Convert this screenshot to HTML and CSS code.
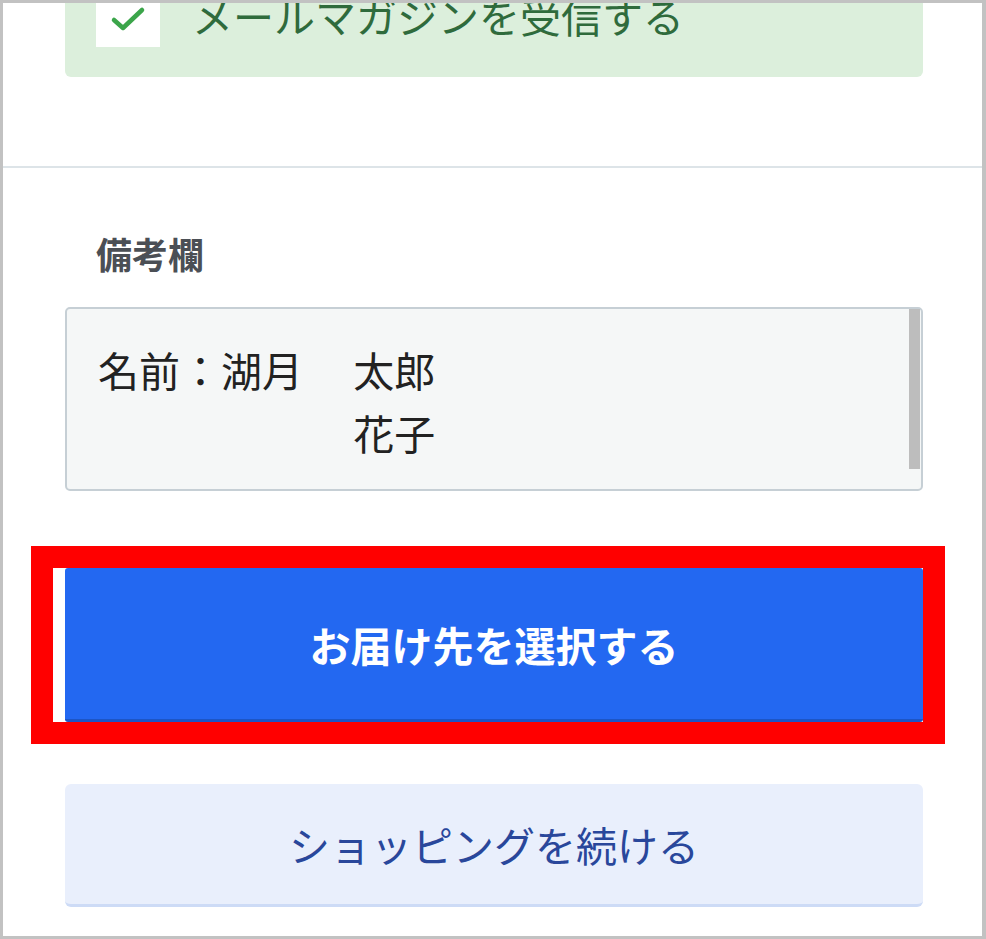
FILE: index.html
```html
<!doctype html>
<html lang="ja">
  <head>
    <meta charset="utf-8">
    <meta name="viewport" content="width=device-width, initial-scale=1">
    <title>お届け先の選択</title>
    <link rel="stylesheet" href="styles.css">
  </head>
  <body>
    <div class="frame">
      <div class="top">
        <div class="mailmag">
          <span class="check">
            <svg viewBox="0 0 64 64" width="64" height="64">
              <polyline points="18,37 27,45 46,27" fill="none" stroke="#3ba54a" stroke-width="4.5" stroke-linecap="round" stroke-linejoin="round"/>
            </svg>
          </span>
          <span class="mailmag-text">メールマガジンを受信する</span>
        </div>
      </div>
      <div class="bottom">
        <label class="memo-label">備考欄</label>
        <div class="memo">
          <div class="memo-text">名前：湖月　 太郎<br>　　　　　　 花子</div>
          <div class="memo-scroll"><span class="thumb"></span></div>
        </div>
        <div class="highlight">
          <button class="btn-primary">お届け先を選択する</button>
        </div>
        <button class="btn-secondary">ショッピングを続ける</button>
      </div>
    </div>
  </body>
</html>
```

FILE: styles.css
```css
* {
    box-sizing: border-box;
}
body {
    margin: 0;
    background: #fff;
    font-family: "Noto Sans CJK JP", "Noto Sans", sans-serif;
}
.frame {
    width: 986px;
    height: 939px;
    border: 3px solid #c2c2c2;
    border-right-width: 4px;
    overflow: hidden;
}
.top {
    display: flow-root;
    padding: 0 59px 0 62px;
    height: 165px;
    border-bottom: 2px solid #dde4e8;
}
.mailmag {
    margin-top: -50px;
    background: #dcefdc;
    border-radius: 0 0 6px 6px;
    padding: 30px 31px;
    display: flex;
    align-items: center;
    gap: 32px;
}
.check {
    width: 64px;
    height: 64px;
    background: #fff;
    display: block;
}
.check svg {
    display: block;
}
.mailmag-text {
    font-size: 41px;
    line-height: 64px;
    color: #2f6b3c;
}
.bottom {
    padding: 58px 59px 0 62px;
}
.memo-label {
    display: block;
    padding-left: 31px;
    font-size: 36px;
    font-weight: bold;
    line-height: 54px;
    color: #4b4f55;
}
.memo {
    margin-top: 27px;
    height: 184px;
    display: flex;
    background: #f5f7f7;
    border: 2px solid #c6cfd5;
    border-radius: 5px;
}
.memo-text {
    flex: 1;
    padding: 29px 0 0 31px;
    font-size: 41px;
    line-height: 63px;
    color: #222;
    white-space: pre;
}
.memo-scroll {
    width: 11px;
    margin-right: 1px;
}
.memo-scroll .thumb {
    display: block;
    height: 160px;
    background: #bdbdbd;
}
.highlight {
    margin: 55px 0 0 -34px;
    width: 914px;
    border: 22px solid #ff0000;
    padding-left: 12px;
    background: #fff;
}
button {
    font-family: inherit;
    border: 0;
    width: 100%;
    display: block;
    cursor: pointer;
}
.btn-primary {
    height: 154px;
    background: #2368f1;
    border-bottom: 3px solid #1d55c5;
    border-radius: 3px;
    color: #fff;
    font-size: 41px;
    font-weight: bold;
}
.btn-secondary {
    margin-top: 40px;
    height: 123px;
    background: #e9effc;
    border-bottom: 3px solid #cddbf6;
    border-radius: 6px;
    color: #29479b;
    font-size: 41px;
}
```
